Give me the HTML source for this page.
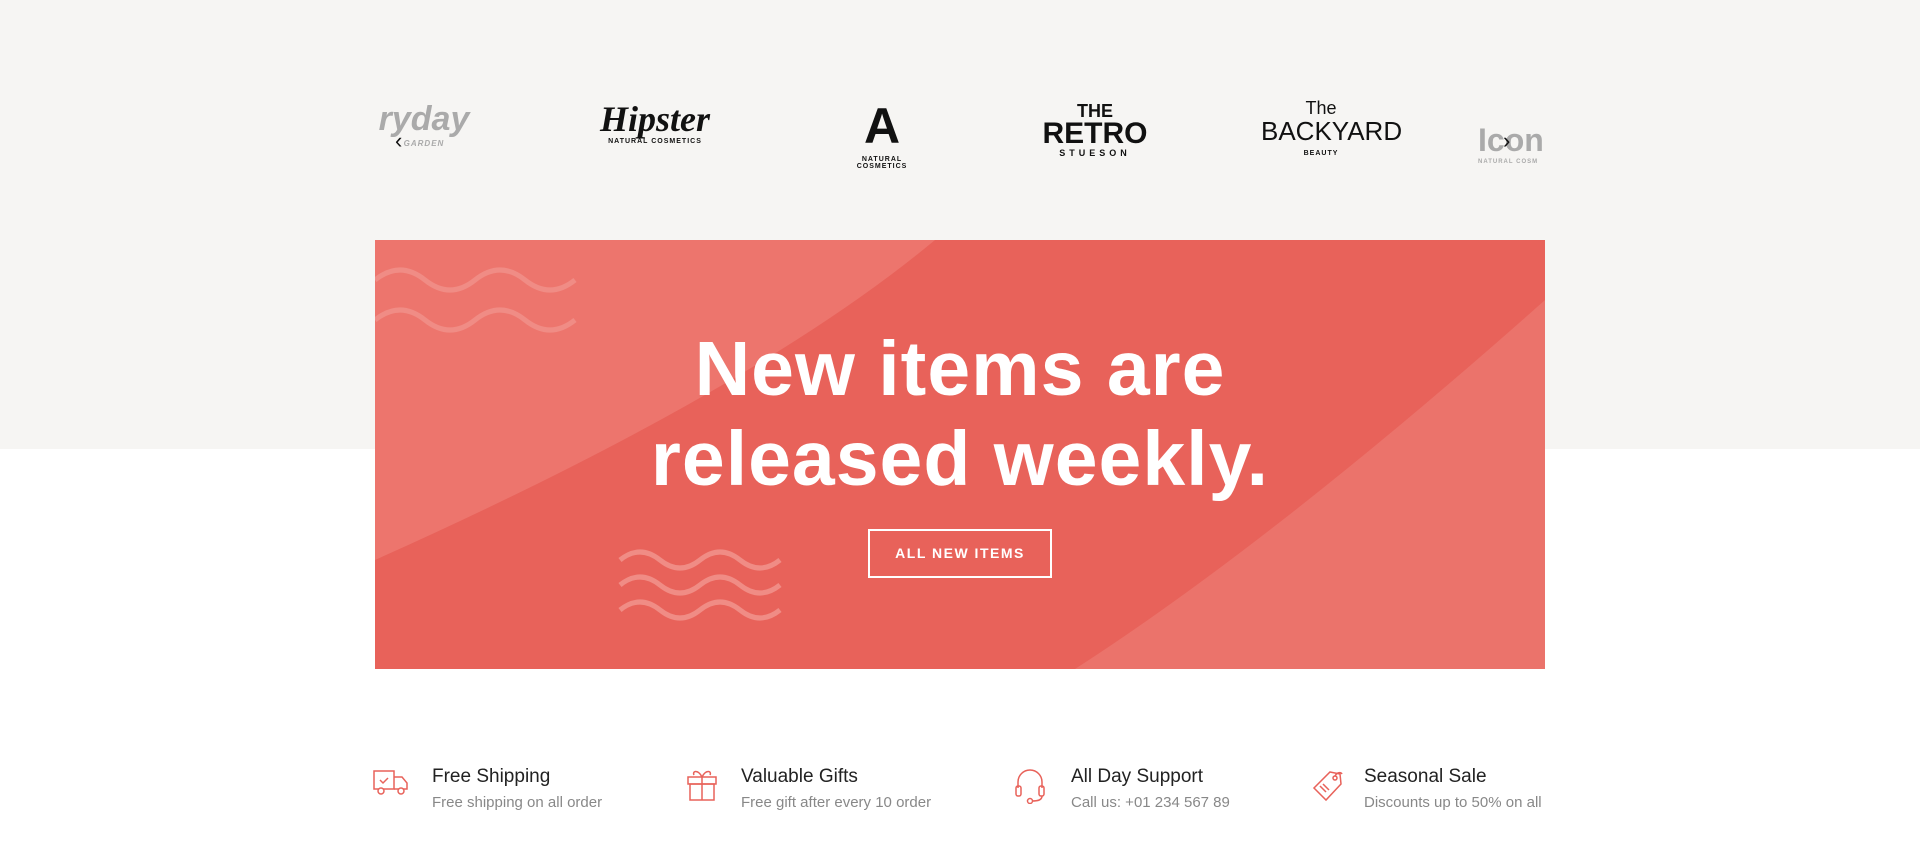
<!DOCTYPE html>
<html><head><meta charset="utf-8"><style>
body{margin:0;width:1920px;height:855px;background:#fff;font-family:"Liberation Sans",sans-serif;position:relative;overflow:hidden}
.top{position:absolute;left:0;top:0;width:1920px;height:449px;background:#f6f5f3}
.logo{position:absolute;text-align:center;color:#111}
.small{font-size:7px;font-weight:bold;letter-spacing:1px}
.banner{position:absolute;left:375px;top:240px;width:1170px;height:429px;background:#e8625a;overflow:hidden}
h1{position:absolute;left:0;width:1170px;top:84px;margin:0;text-align:center;color:#fff;font-size:77px;line-height:90px;font-weight:bold;letter-spacing:1px}
.btn{position:absolute;left:493px;top:289px;width:180px;height:45px;border:2px solid #fff;color:#fff;font-size:14px;letter-spacing:1.5px;text-align:center;line-height:45px;font-weight:bold}
.f{position:absolute;top:762px}
.f svg{position:absolute;left:0;top:6px}
.f .t{position:absolute;top:4px;font-size:19px;color:#222;white-space:nowrap}
.f .s{position:absolute;top:32px;font-size:15px;color:#888;white-space:nowrap}
</style></head><body>
<div class="top"></div>
<div class="logo" style="left:373px;top:100px;width:102px;color:#aaa;font-size:34px;font-style:italic;font-weight:bold;overflow:hidden;white-space:nowrap">ryday<div class="small" style="color:#aaa;font-size:8px">GARDEN</div></div>
<div class="logo" style="left:395px;top:128px;font-size:22px;color:#111">‹</div>
<div class="logo" style="left:575px;top:100px;width:160px"><div style="height:28px;background:#e6e5e3;position:absolute;left:0;right:0;top:14px;z-index:-1"></div><div style="font-size:36px;font-style:italic;font-weight:bold;font-family:'Liberation Serif',serif;line-height:38px">Hipster</div><div class="small">NATURAL COSMETICS</div></div>
<div class="logo" style="left:836px;top:96px;width:92px"><div style="font-size:50px;font-weight:bold;line-height:60px">A</div><div class="small">NATURAL COSMETICS</div></div>
<div class="logo" style="left:1029px;top:102px;width:132px;font-weight:bold"><div style="font-size:18px;line-height:18px">THE</div><div style="font-size:30px;line-height:28px">RETRO</div><div style="font-size:9px;letter-spacing:4px">STUESON</div></div>
<div class="logo" style="left:1261px;top:98px;width:120px"><div style="font-size:18px;line-height:20px">The</div><div style="font-size:26px;line-height:26px">BACKYARD</div><div class="small" style="margin-top:6px">BEAUTY</div></div>
<div class="logo" style="left:1478px;top:122px;width:67px;overflow:hidden;white-space:nowrap;color:#aaa;font-size:32px;font-weight:bold;text-align:left">Icon<div class="small" style="font-size:6px">NATURAL COSM</div></div>
<div class="logo" style="left:1503px;top:128px;font-size:22px;color:#111">›</div>
<div class="banner">
<svg width="1170" height="429" style="position:absolute;left:0;top:0">
<path d="M0 0 L560 0 Q380 150 0 320 Z" fill="#ed7a72" opacity=".8"/>
<path d="M1170 60 Q900 300 700 429 L1170 429 Z" fill="#ed7a72" opacity=".7"/>
<g fill="none" stroke="#f08c85" stroke-width="5"><path d="M0 40q25-20 50 0t50 0 50 0 50 0"/><path d="M0 80q25-20 50 0t50 0 50 0 50 0"/><path d="M245 320q20-16 40 0t40 0 40 0 40 0"/><path d="M245 345q20-16 40 0t40 0 40 0 40 0"/><path d="M245 370q20-16 40 0t40 0 40 0 40 0"/></g>
</svg>
<h1>New items are<br>released weekly.</h1>
<div class="btn">ALL NEW ITEMS</div>
</div>
<div class="f" style="left:373px"><svg width="36" height="30" fill="none" stroke="#e8625a" stroke-width="1.5"><rect x="1" y="3" width="20" height="18"/><path d="M21 9h8l5 6v6H21M7 12l3 3 5-5"/><circle cx="8" cy="23" r="3" fill="#fff"/><circle cx="28" cy="23" r="3" fill="#fff"/></svg><div class="t" style="left:59px">Free Shipping</div><div class="s" style="left:59px">Free shipping on all order</div></div>
<div class="f" style="left:686px"><svg width="32" height="34" fill="none" stroke="#e8625a" stroke-width="1.5"><rect x="2" y="9" width="28" height="7"/><rect x="4" y="16" width="24" height="16"/><path d="M16 9v23M16 9c-4-8-10-6-8-2M16 9c4-8 10-6 8-2"/></svg><div class="t" style="left:55px">Valuable Gifts</div><div class="s" style="left:55px">Free gift after every 10 order</div></div>
<div class="f" style="left:1014px"><svg width="32" height="36" fill="none" stroke="#e8625a" stroke-width="1.5"><path d="M4 20v-6a12 12 0 0 1 24 0v6"/><rect x="2" y="18" width="5" height="10" rx="2"/><rect x="25" y="18" width="5" height="10" rx="2"/><path d="M28 28c0 4-4 5-10 5"/><circle cx="16" cy="33" r="2.5"/></svg><div class="t" style="left:57px">All Day Support</div><div class="s" style="left:57px">Call us: +01 234 567 89</div></div>
<div class="f" style="left:1310px"><svg width="34" height="34" fill="none" stroke="#e8625a" stroke-width="1.5"><path d="M20 4l10 2 1 10-15 16-12-12z"/><circle cx="25" cy="10" r="2"/><path d="M25 8c2-4 6-4 7-2M10 18l6 6M13 16l6 6"/></svg><div class="t" style="left:54px">Seasonal Sale</div><div class="s" style="left:54px">Discounts up to 50% on all</div></div>
</body></html>
